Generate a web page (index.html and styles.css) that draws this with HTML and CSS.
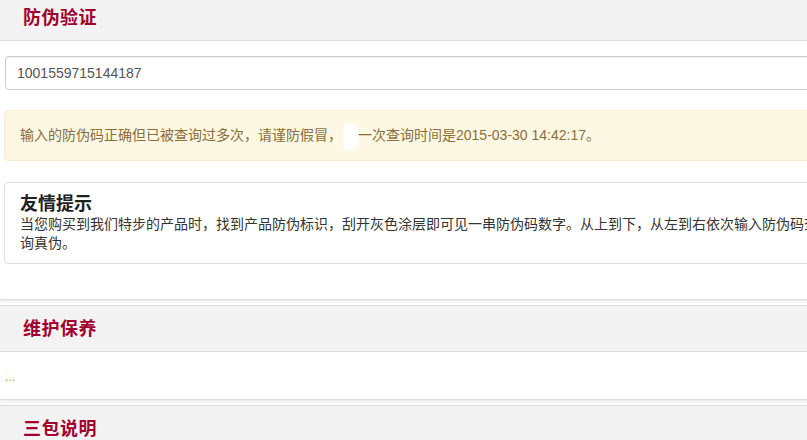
FILE: index.html
```html
<!DOCTYPE html>
<html lang="zh-CN">
<head>
  <meta charset="UTF-8">
  <meta name="viewport" content="width=device-width, initial-scale=1.0">
  <title>防伪验证</title>
  <link rel="stylesheet" href="styles.css">
</head>
<body>
  <div class="page">
    <!-- 防伪验证 -->
    <div class="panel first">
      <div class="panel-head"><h2>防伪验证</h2></div>
      <div class="panel-body">
        <input class="code-input" type="text" value="1001559715144187">

        <div class="alert">输入的防伪码正确但已被查询过多次，请谨防假冒，<span class="blot"></span>一次查询时间是2015-03-30 14:42:17。</div>

        <div class="tips">
          <h3>友情提示</h3>
          <p>当您购买到我们特步的产品时，找到产品防伪标识，刮开灰色涂层即可见一串防伪码数字。从上到下，从左到右依次输入防伪码查询真伪。</p>
        </div>
      </div>
    </div>

    <!-- 维护保养 -->
    <div class="panel">
      <div class="panel-head"><h2>维护保养</h2></div>
      <div class="panel-body short">
        <span class="more">...</span>
      </div>
    </div>

    <!-- 三包说明 -->
    <div class="panel">
      <div class="panel-head"><h2>三包说明</h2></div>
      <div class="panel-body short"></div>
    </div>
  </div>
</body>
</html>
```

FILE: styles.css
```css
/* 通用 */
* {
  margin: 0;
  padding: 0;
  box-sizing: border-box;
}

html,
body {
  overflow: hidden;
}

body {
  font-family: "Liberation Sans", "Noto Sans CJK SC", sans-serif;
  font-size: 14px;
  color: #333;
  background: #fff;
}

.page {
  width: 845px;
}

/* 面板 */
.panel {
  background: #fff;
  border-bottom: 1px solid #e0e0e0;
  box-shadow: 0 2px 3px rgba(0, 0, 0, 0.08);
}

.panel + .panel {
  margin-top: 5px;
  border-top: 1px solid #dcdcdc;
}

.panel-head {
  background: #f3f3f3;
  border-bottom: 1px solid #dcdcdc;
  height: 46px;
  padding: 8px 23px 0;
}

.first .panel-head {
  margin-top: -6px;
  height: 47px;
  padding-top: 9px;
}

.panel-head h2 {
  font-family: "Noto Sans CJK SC", sans-serif;
  font-size: 18px;
  font-weight: bold;
  color: #a2002e;
  line-height: 26px;
  letter-spacing: 0.5px;
}

.panel-body {
  padding: 15px 0 35px 4px;
}

.panel-body.short {
  height: 47px;
  padding: 0 0 0 5px;
}

/* 输入框 */
.code-input {
  display: block;
  width: 100%;
  height: 34px;
  margin-left: 1px;
  padding: 0 12px 0 11px;
  font-family: "Liberation Sans", sans-serif;
  font-size: 14px;
  color: #555;
  border: 1px solid #ccc;
  border-radius: 4px;
  box-shadow: inset 0 1px 1px rgba(0, 0, 0, 0.075);
}

/* 警告 */
.alert {
  margin-top: 20px;
  padding: 15px 15px;
  height: 51px;
  background: #fcf8e3;
  border: 1px solid #faebcc;
  border-radius: 4px;
  color: #8a6d3b;
  font-size: 14px;
  line-height: 19px;
}

.blot {
  display: inline-block;
  width: 14px;
  height: 26px;
  margin: -4px 0 -6px 2px;
  vertical-align: middle;
  background: #fff;
  border-radius: 3px 6px 6px 3px;
  box-shadow: 0 0 3px #fff;
}

/* 友情提示 */
.tips {
  margin-top: 21px;
  padding: 9px 15px 10px;
  height: 82px;
  border: 1px solid #ddd;
  border-radius: 4px;
}

.tips h3 {
  font-family: "Noto Sans CJK SC", sans-serif;
  font-size: 18px;
  font-weight: bold;
  color: #222;
  line-height: 20px;
}

.tips p {
  margin-top: 2px;
  font-family: "Noto Sans CJK SC", sans-serif;
  font-size: 14px;
  line-height: 19px;
  color: #333;
}

/* 更多 */
.more {
  display: inline-block;
  margin-top: 18px;
  font-size: 12px;
  color: #9a9a7a;
  background: #fdfdf3;
}
```
